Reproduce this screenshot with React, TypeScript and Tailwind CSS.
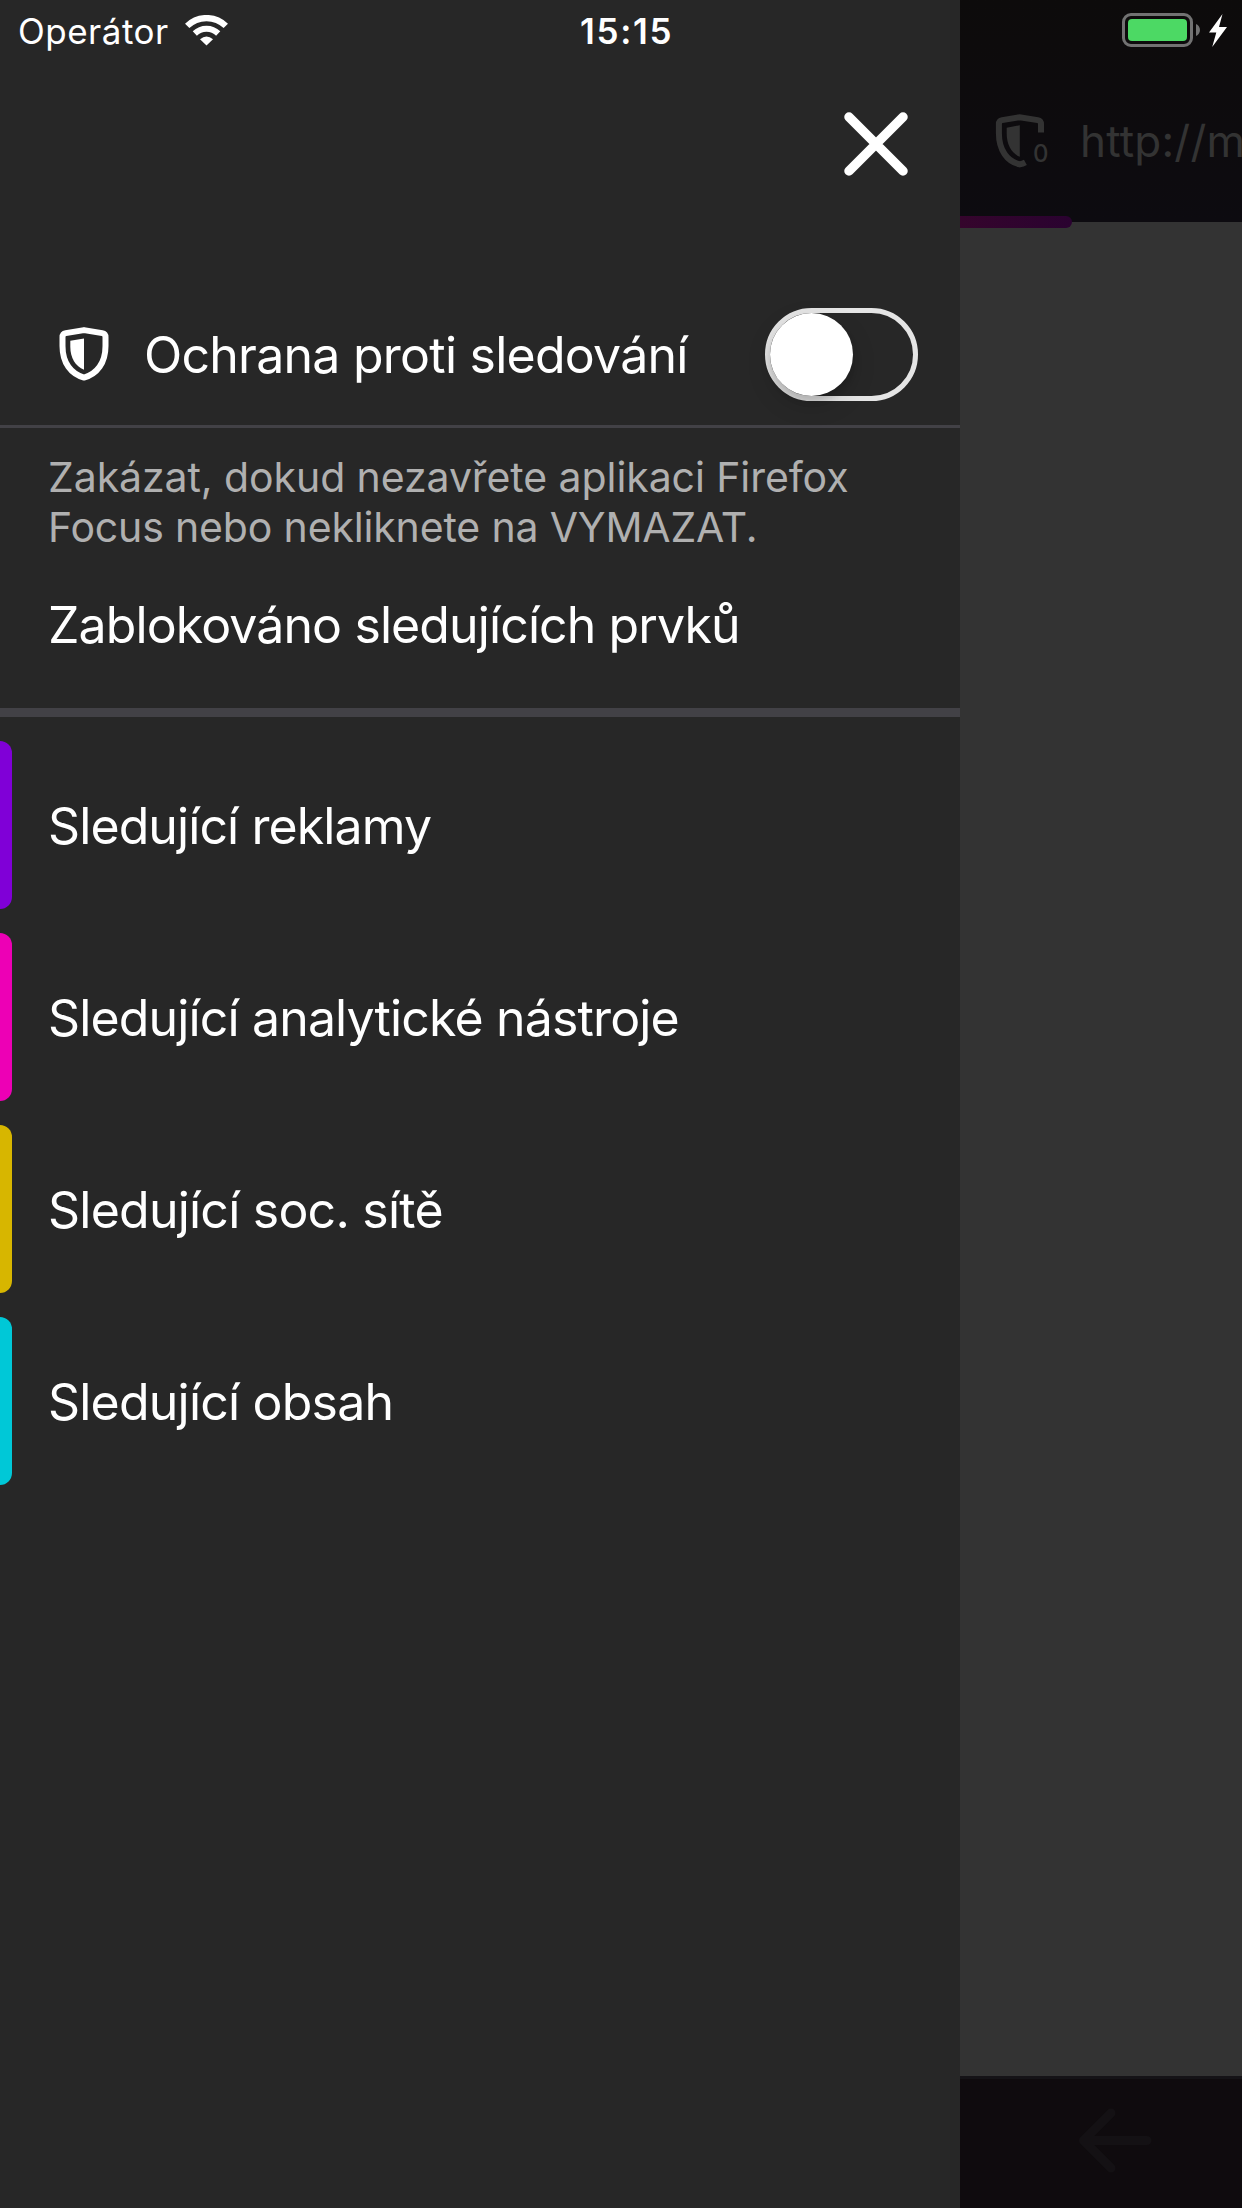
const trackers = [
  { label: "Sledující reklamy", bar: "bg-[#8000d7]", tracking: "tracking-[-0.9px]" },
  { label: "Sledující analytické nástroje", bar: "bg-[#ed00b5]", tracking: "tracking-[-0.85px]" },
  { label: "Sledující soc. sítě", bar: "bg-[#d7b600]", tracking: "tracking-[-0.77px]" },
  { label: "Sledující obsah", bar: "bg-[#00c8d7]", tracking: "tracking-[-0.79px]" },
];

function WifiIcon() {
  return (
    <svg className="h-[31px] w-[43px] shrink-0" viewBox="0 0 43 31" fill="none">
      <path d="M2.2 10.9A27.6 27.6 0 0 1 40.8 10.9" stroke="white" strokeWidth="6.2" />
      <path d="M9.8 18.5A16.8 16.8 0 0 1 33.2 18.5" stroke="white" strokeWidth="6" />
      <path d="M21.5 30.6L15 24.2Q21.5 18.8 28 24.2Z" fill="white" />
    </svg>
  );
}

function CloseIcon() {
  return (
    <svg className="size-[66px]" viewBox="0 0 66 66" fill="none" stroke="white" strokeWidth="9.5" strokeLinecap="round">
      <path d="M6 6L60 60M60 6L6 60" />
    </svg>
  );
}

function ShieldIcon() {
  return (
    <svg className="h-[54px] w-[50px] shrink-0" viewBox="0 0 50 54" fill="none">
      <path
        d="M25 3.1L43.2 6.1Q46.5 6.7 46.5 10V19C46.5 36 38 47 25 50.6C12 47 3.5 36 3.5 19V10Q3.5 6.7 6.8 6.1Z"
        stroke="white"
        strokeWidth="6"
        strokeLinejoin="round"
      />
      <path d="M25 11.4L11.3 13.7V19.5C11.3 31 16.5 39.5 25 42.7Z" fill="white" />
    </svg>
  );
}

function ShieldCountIcon() {
  return (
    <svg className="h-[54px] w-[50px] shrink-0" viewBox="0 0 50 54" fill="none">
      <path
        d="M46 18.5V10Q46 6.7 42.7 6.1L24.8 3.2L7.2 6.1Q3.9 6.7 3.9 10V19C3.9 36 12 47.6 24.8 50.4Q27.7 49.8 30.4 48.3"
        stroke="#333333"
        strokeWidth="6"
      />
      <path d="M24.8 11.2L11.7 13.7V19.5C11.7 31 16.7 39.5 24.8 42.7Z" fill="#333333" />
    </svg>
  );
}

function Battery() {
  return (
    <div className="flex items-center">
      <div className="h-[34px] w-[71px] rounded-[9px] border-[3px] border-[#727272] p-[3px]">
        <div className="h-full w-full rounded-[4px] bg-[#4cd964]" />
      </div>
      <svg className="ml-[3px] h-[12px] w-[4px]" viewBox="0 0 4 12">
        <path d="M0 0C5.3 2 5.3 10 0 12Z" fill="#727272" />
      </svg>
      <svg className="ml-[8px] h-[33px] w-[20px]" viewBox="0 0 20 33">
        <path d="M14.5 0L1 18.5H8.3L4.2 33L19 13H11Z" fill="white" />
      </svg>
    </div>
  );
}

function Toggle() {
  return (
    <button className="mr-[42px] ml-auto h-[93px] w-[153px] rounded-full border-[5px] border-[#e5e5e5]">
      <span className="block size-[83px] rounded-full bg-white shadow-[0_9px_24px_rgba(0,0,0,0.15),0_6px_6px_rgba(0,0,0,0.12)]" />
    </button>
  );
}

function Panel() {
  return (
    <aside className="flex w-[960px] shrink-0 flex-col bg-[#272727]">
      <div className="flex h-[62px] items-center pl-[18px] text-[35px] leading-none">
        <span className="w-[167px] tracking-[0.5px]">Operátor</span>
        <div className="-mt-[2px]">
          <WifiIcon />
        </div>
        <span className="ml-[352px] font-semibold tracking-[1.68px]">15:15</span>
      </div>

      <div className="flex h-[222px] justify-end pt-[49px] pr-[51px]">
        <button className="size-[66px]">
          <CloseIcon />
        </button>
      </div>

      <div className="flex h-[144px] items-center border-b-[3px] border-[#424146] pl-[59px]">
        <div className="-mt-[2px]">
          <ShieldIcon />
        </div>
        <span className="ml-[35px] text-[50px] leading-[60px] tracking-[-0.75px]">Ochrana proti sledování</span>
        <Toggle />
      </div>

      <p className="pt-[24px] pl-[48px] text-[41px] leading-[50px] text-[#b0b0b0]">
        <span className="tracking-[-0.08px]">Zakázat, dokud nezavřete aplikaci Firefox</span>
        <br />
        <span className="tracking-[-0.16px]">Focus nebo nekliknete na VYMAZAT.</span>
      </p>
      <h2 className="border-b-[9px] border-[#424146] pt-[43px] pb-[53px] pl-[48px] text-[50px] leading-[60px] tracking-[-0.89px]">
        Zablokováno sledujících prvků
      </h2>

      <ul className="flex flex-col gap-6 pt-6">
        {trackers.map((t) => (
          <li key={t.label} className="flex h-[168px] items-center">
            <span className={`h-full w-3 rounded-r-[12px] ${t.bar}`} />
            <span className={`pt-[2px] pl-[36px] text-[50px] leading-[60px] ${t.tracking}`}>{t.label}</span>
          </li>
        ))}
      </ul>
    </aside>
  );
}

function Browser() {
  return (
    <main className="flex w-[282px] flex-col overflow-hidden bg-[#333333]">
      <header className="relative h-[222px] bg-linear-to-b from-[#0d0b0b] to-[#0d0b10]">
        <div className="flex h-[60px] items-center justify-end pr-[14px]">
          <Battery />
        </div>
        <div className="flex h-[162px] items-start pt-[54px] pl-[35px] text-[#333333]">
          <div className="flex w-[85px] shrink-0">
            <ShieldCountIcon />
            <span className="-ml-[12px] pt-[26px] text-[24px] leading-[28px] font-medium">0</span>
          </div>
          <span className="text-[44px] leading-[54px] tracking-[0.2px] whitespace-nowrap">http://m</span>
        </div>
        <div className="absolute top-[216px] left-0 h-3 w-[112px] rounded-r-full bg-linear-to-r from-[#35052c] to-[#2a0230]" />
      </header>
      <footer className="mt-auto h-[132px] border-t-[3px] border-[#151317] bg-[#0f0b0e] pt-[29px] pl-[118px]">
        <svg
          className="h-[66px] w-[74px]"
          viewBox="0 0 74 66"
          fill="none"
          stroke="#141114"
          strokeWidth="9"
          strokeLinecap="round"
          strokeLinejoin="round"
        >
          <path d="M69 32.5H6M33 5L5.5 32.5L33 60" />
        </svg>
      </footer>
    </main>
  );
}

export default function App() {
  return (
    <div className="flex h-[2208px] w-[1242px] overflow-hidden font-['Inter',sans-serif] text-white">
      <Panel />
      <Browser />
    </div>
  );
}
